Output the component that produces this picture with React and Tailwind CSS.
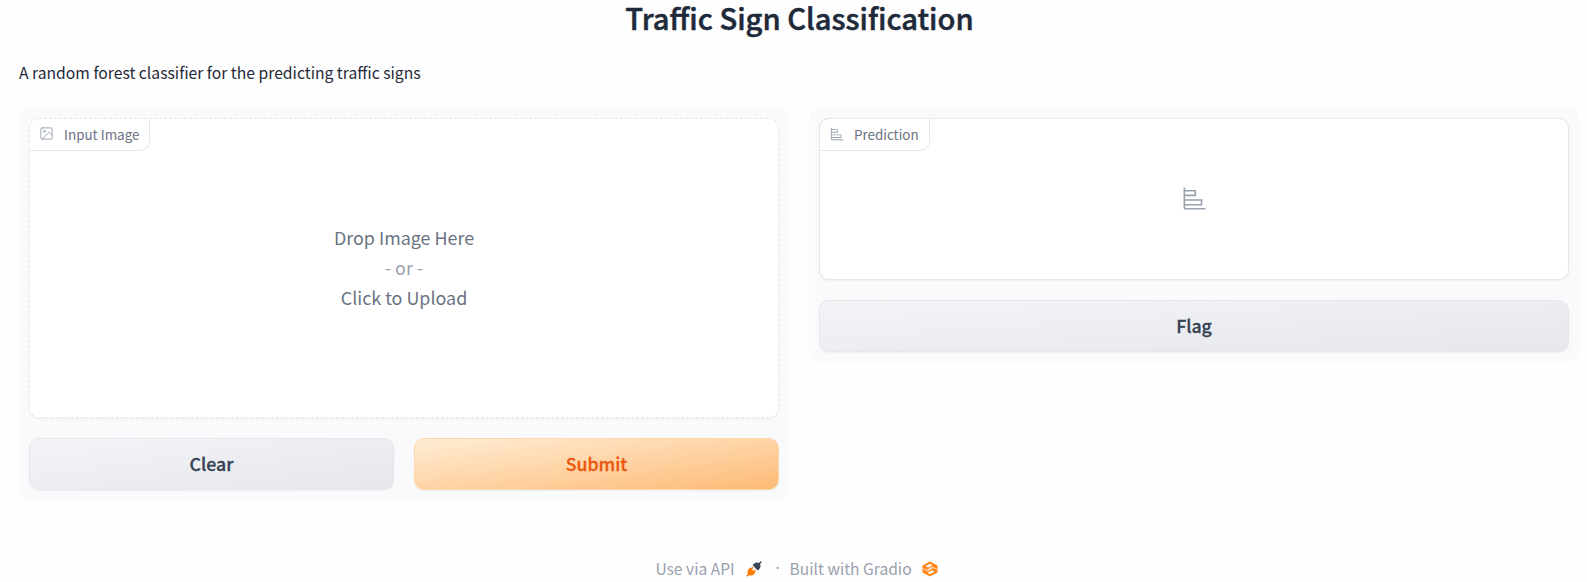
const panel = "flex flex-col gap-5 rounded-[10px] bg-[#f9fafb] p-2.5";
const button = "flex h-[52px] items-center justify-center rounded-[10px] border pb-0.5 text-[17.7px] font-medium [-webkit-text-stroke:0.3px] shadow-[0_1px_2px_rgba(0,0,0,0.05)]";
const grayButton = "border-gray-200 bg-linear-to-br from-gray-100 to-gray-200 text-gray-700";

function BarsIcon({ className }) {
  return (
    <svg viewBox="0 0 32 32" fill="currentColor" className={className}>
      <path d="M4 2H2v26a2 2 0 0 0 2 2h26v-2H4v-3h22v-8H4v-4h14V5H4Zm20 17v4H4v-4ZM16 7v4H4V7Z" />
    </svg>
  );
}

function ImageIcon({ className }) {
  return (
    <svg viewBox="0 0 24 24" fill="none" stroke="currentColor" strokeWidth="1.5" strokeLinecap="round" strokeLinejoin="round" className={className}>
      <rect x="3" y="3" width="18" height="18" rx="2" />
      <circle cx="8.5" cy="8.5" r="1.5" />
      <polyline points="21 15 16 10 5 21" />
    </svg>
  );
}

function PlugIcon({ className }) {
  return (
    <svg viewBox="0 0 28 28" fill="none" className={className}>
      <path d="M26.94 2.94C27.46 2.42 27.46 1.58 26.94 1.06C26.42 .54 25.58 .54 25.06 1.06L22.57 3.54C21.12 2.59 19.54 2.43 18.18 2.64C16.55 2.89 15.11 3.67 14.39 4.39L12.39 6.39C12.14 6.64 12 6.98 12 7.33C12 7.69 12.14 8.03 12.39 8.28L19.72 15.61C20.24 16.13 21.09 16.13 21.61 15.61L23.61 13.61C24.33 12.89 25.11 11.45 25.36 9.82C25.57 8.46 25.41 6.88 24.46 5.43Z" fill="#3c4555" />
      <path d="M12.28 12.94C12.8 12.42 12.8 11.58 12.28 11.06C11.76 10.54 10.91 10.54 10.39 11.06L8.67 12.78L8.28 12.39C7.76 11.87 6.91 11.87 6.39 12.39L4.39 14.39C3.67 15.11 2.89 16.55 2.64 18.18C2.43 19.54 2.59 21.12 3.54 22.57L1.06 25.06C.54 25.58 .54 26.42 1.06 26.94C1.58 27.46 2.42 27.46 2.94 26.94L5.43 24.46C6.88 25.41 8.46 25.57 9.82 25.36C11.45 25.11 12.89 24.33 13.61 23.61L15.61 21.61C16.13 21.09 16.13 20.24 15.61 19.72L15.22 19.33L16.94 17.61C17.46 17.09 17.46 16.25 16.94 15.72C16.42 15.2 15.58 15.2 15.06 15.72L13.33 17.45L10.55 14.67Z" fill="#ff7c00" />
    </svg>
  );
}

function GradioIcon({ className }) {
  return (
    <svg viewBox="0 0 32 32" fill="none" className={className}>
      <path d="M16 1L31 9V23L16 31L1 23V9Z" fill="#ff8514" />
      <path d="M1 15.5L13 22L24 16L31 12V16.5L19 10L8 16L1 20Z" fill="#ff9d42" />
      <path d="M7 10.5L16 5.7L21 8.4L12 13.2Z" fill="#fefefe" />
      <path d="M25 21.5L16 26.3L11 23.6L20 18.8Z" fill="#fefefe" />
      <path d="M1 14.5L11 19.8L20.5 14.8M31 17.5L21 12.2L11.5 17.2" stroke="#fefefe" strokeWidth="1.3" />
    </svg>
  );
}

export default function App() {
  return (
    <div className="flex h-[582px] flex-col overflow-hidden bg-[#fefefe] pr-2 pl-[19px] font-['Noto_Sans_CJK_SC','Noto_Sans',sans-serif] text-gray-800">
      <h1 className="h-[34px] pl-px text-center text-[29.2px] leading-[34px] font-medium [-webkit-text-stroke:0.5px]">Traffic Sign Classification</h1>
      <p className="mt-[25px] h-7 text-[15.7px] leading-7">A random forest classifier for the predicting traffic signs</p>
      <main className="mt-[21px] grid grid-cols-2 items-start gap-5">
        <section className={panel}>
          <div className="relative flex h-[300px] flex-col items-center justify-center rounded-[10px] border border-dashed border-gray-200 bg-white pb-0.5 text-[17.9px] leading-[30px] text-gray-500 shadow-[0_1px_2px_rgba(0,0,0,0.05)]">
            <div className="absolute -top-px -left-px flex h-[33px] w-[121px] items-center rounded-tl-[10px] rounded-br-[10px] border-r border-b border-gray-200 pl-[10px] text-[13.45px]">
              <ImageIcon className="mb-px size-[15px] text-gray-400" />
              <span className="ml-[10px]">Input Image</span>
            </div>
            <span>Drop Image Here</span>
            <span className="text-gray-400">- or -</span>
            <span>Click to Upload</span>
          </div>
          <div className="grid grid-cols-2 gap-5">
            <button className={`${button} ${grayButton}`}>Clear</button>
            <button className={`${button} border-[#fed7aa] bg-linear-to-br from-[#ffedd5] to-[#fdba74] text-[#ea580c]`}>Submit</button>
          </div>
        </section>
        <section className={panel}>
          <div className="relative flex h-[162px] items-center justify-center rounded-[10px] border border-gray-200 bg-white pb-0.5 shadow-[0_1px_2px_rgba(0,0,0,0.05)]">
            <div className="absolute -top-px -left-px flex h-[33px] w-[111px] items-center rounded-tl-[10px] rounded-br-[10px] border border-gray-200 pl-[10px] text-[13.4px] text-gray-500">
              <BarsIcon className="mb-px size-[14px] text-gray-400" />
              <span className="ml-[10px]">Prediction</span>
            </div>
            <BarsIcon className="size-[25px] text-gray-400" />
          </div>
          <button className={`${button} ${grayButton}`}>Flag</button>
        </section>
      </main>
      <footer className="mt-auto flex h-[26px] items-center justify-center pr-[5px] text-[15.6px] text-gray-400">
        <span>Use via API</span>
        <PlugIcon className="ml-[11px] size-[16px]" />
        <span className="mr-[10px] ml-[14px] w-1 text-center font-['Noto_Sans',sans-serif]">·</span>
        <span>Built with Gradio</span>
        <GradioIcon className="ml-[10px] size-[16px]" />
      </footer>
    </div>
  );
}
